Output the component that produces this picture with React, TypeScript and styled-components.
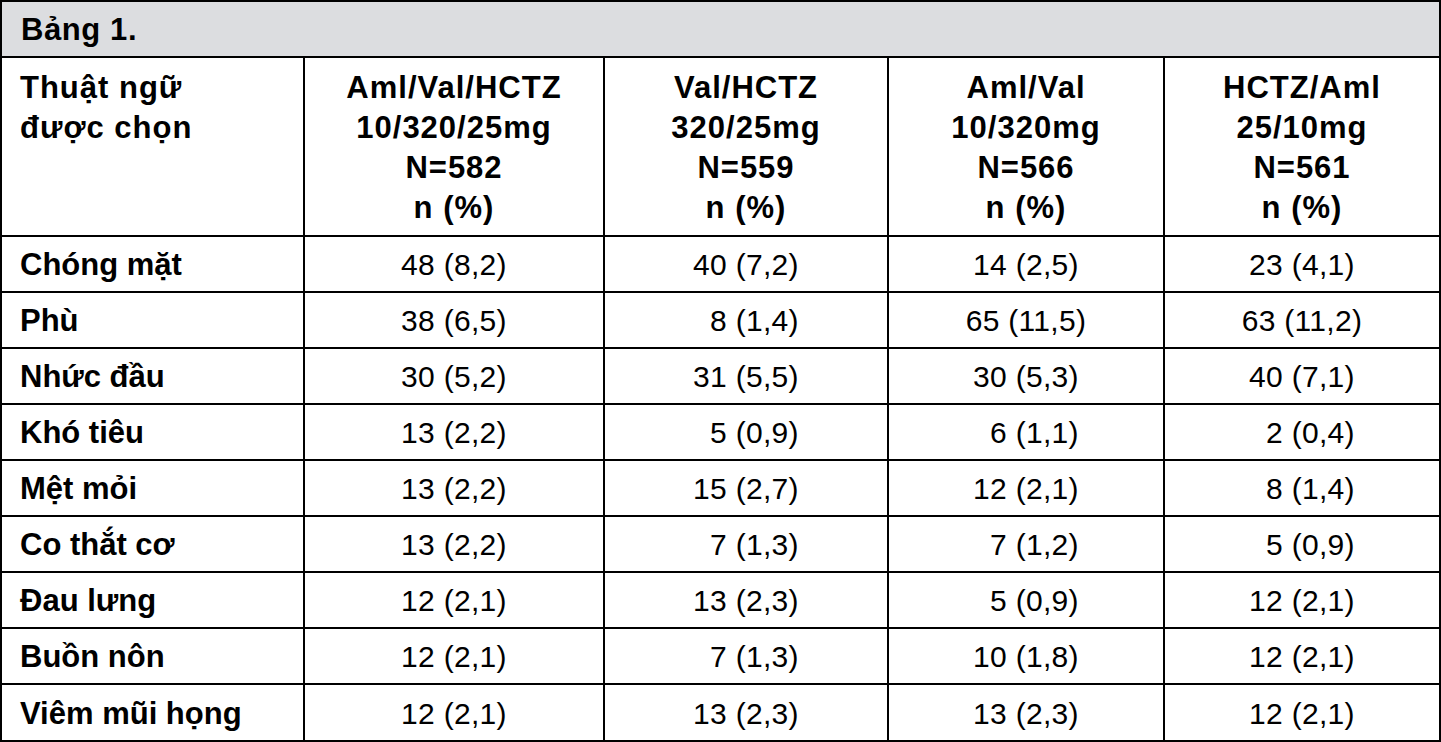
import React from "react";
import styled, { createGlobalStyle } from "styled-components";

const GlobalStyle = createGlobalStyle`
  html, body {
    margin: 0;
    padding: 0;
    background: #ffffff;
  }
  body {
    font-family: "Liberation Sans", Arial, Helvetica, sans-serif;
    color: #000;
  }
`;

const Table = styled.div`
  box-sizing: border-box;
  width: 1441px;
  height: 742px;
  border: 2px solid #000;
  display: grid;
  grid-template-columns: 303px 300px 284px 276px 274px;
  grid-template-rows: 56px 179px repeat(8, 56px) 55px;
  font-family: "Liberation Sans", Arial, Helvetica, sans-serif;
  color: #000;
`;

const Caption = styled.div`
  grid-column: 1 / -1;
  box-sizing: border-box;
  background: #dcdde0;
  border-bottom: 2px solid #000;
  display: flex;
  align-items: center;
  padding-left: 19px;
  padding-top: 2px;
  font-size: 31px;
  font-weight: 700;
  letter-spacing: 0.6px;
`;

const Cell = styled.div<{ $last?: boolean; $lastRow?: boolean }>`
  box-sizing: border-box;
  border-right: ${(p) => (p.$last ? "none" : "2px solid #000")};
  border-bottom: ${(p) => (p.$lastRow ? "none" : "2px solid #000")};
  display: flex;
  align-items: center;
  font-size: 31px;
  line-height: 40px;
  white-space: pre;
`;

const HeadCell = styled(Cell)<{ $left?: boolean }>`
  font-weight: 700;
  letter-spacing: 1px;
  flex-direction: column;
  justify-content: ${(p) => (p.$left ? "flex-start" : "center")};
  align-items: ${(p) => (p.$left ? "flex-start" : "center")};
  text-align: ${(p) => (p.$left ? "left" : "center")};
  padding: ${(p) => (p.$left ? "10px 0 0 18px" : "2px 0 0 0")};
`;

const TermCell = styled(Cell)`
  font-weight: 700;
  padding-left: 18px;
  padding-top: 2px;
`;

const ValueCell = styled(Cell)`
  justify-content: center;
  font-size: 30px;
  letter-spacing: 0.3px;
  padding-top: 2px;
`;

const headers = [
  ["Aml/Val/HCTZ", "10/320/25mg", "N=582", "n (%)"],
  ["Val/HCTZ", "320/25mg", "N=559", "n (%)"],
  ["Aml/Val", "10/320mg", "N=566", "n (%)"],
  ["HCTZ/Aml", "25/10mg", "N=561", "n (%)"],
];

const F = "\u2007";

const rows: [string, string[]][] = [
  ["Chóng mặt", ["48 (8,2)", "40 (7,2)", "14 (2,5)", "23 (4,1)"]],
  ["Phù", ["38 (6,5)", F + "8 (1,4)", "65 (11,5)", "63 (11,2)"]],
  ["Nhức đầu", ["30 (5,2)", "31 (5,5)", "30 (5,3)", "40 (7,1)"]],
  ["Khó tiêu", ["13 (2,2)", F + "5 (0,9)", F + "6 (1,1)", F + "2 (0,4)"]],
  ["Mệt mỏi", ["13 (2,2)", "15 (2,7)", "12 (2,1)", F + "8 (1,4)"]],
  ["Co thắt cơ", ["13 (2,2)", F + "7 (1,3)", F + "7 (1,2)", F + "5 (0,9)"]],
  ["Đau lưng", ["12 (2,1)", "13 (2,3)", F + "5 (0,9)", "12 (2,1)"]],
  ["Buồn nôn", ["12 (2,1)", F + "7 (1,3)", "10 (1,8)", "12 (2,1)"]],
  ["Viêm mũi họng", ["12 (2,1)", "13 (2,3)", "13 (2,3)", "12 (2,1)"]],
];

export default function App() {
  return (
    <>
      <GlobalStyle />
      <Table>
        <Caption>Bảng 1.</Caption>
        <HeadCell $left>
          <span>Thuật ngữ</span>
          <span>được chọn</span>
        </HeadCell>
        {headers.map((h, i) => (
          <HeadCell key={i} $last={i === headers.length - 1}>
            {h.map((line, j) => (
              <span key={j}>{line}</span>
            ))}
          </HeadCell>
        ))}
        {rows.map(([term, vals], r) => {
          const lastRow = r === rows.length - 1;
          return (
            <React.Fragment key={term}>
              <TermCell $lastRow={lastRow}>{term}</TermCell>
              {vals.map((v, c) => (
                <ValueCell key={c} $lastRow={lastRow} $last={c === vals.length - 1}>
                  {v}
                </ValueCell>
              ))}
            </React.Fragment>
          );
        })}
      </Table>
    </>
  );
}
